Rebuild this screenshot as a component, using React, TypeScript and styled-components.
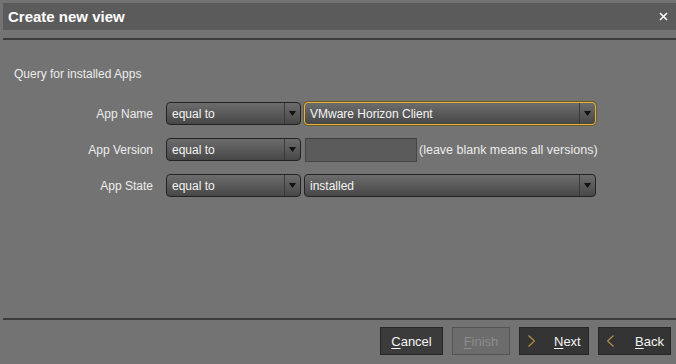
import React from "react";
import styled, { createGlobalStyle } from "styled-components";

const GlobalStyle = createGlobalStyle`
  html, body {
    margin: 0;
    padding: 0;
    background: #737373;
  }
  * {
    box-sizing: border-box;
  }
`;

const Window = styled.div`
  display: flex;
  flex-direction: column;
  height: 364px;
  padding: 3px 0 0 3px;
  font-family: "Liberation Sans", Arial, sans-serif;
  font-size: 12px;
  color: #f0f0f0;
`;

const TitleBar = styled.div`
  display: flex;
  align-items: center;
  justify-content: space-between;
  height: 27px;
  padding: 0 7px 0 5px;
  background: #5b5b5b;
`;

const Title = styled.h1`
  margin: 0;
  font-size: 15px;
  font-weight: bold;
  color: #ffffff;
`;

const CloseButton = styled.button`
  display: flex;
  align-items: center;
  justify-content: center;
  width: 12px;
  height: 12px;
  padding: 0;
  border: none;
  background: none;
  cursor: pointer;
`;

const Divider = styled.hr<{ $top: number }>`
  margin: ${(p) => p.$top}px 0 0;
  border: none;
  border-top: 2px solid #3c3c3c;
  height: 0;
`;

const Content = styled.div`
  flex: 1;
  padding: 27px 0 0 11px;
`;

const SectionTitle = styled.p`
  margin: 0 0 21px;
  line-height: 14px;
  color: #ececec;
`;

const Form = styled.div`
  display: flex;
  flex-direction: column;
  gap: 13px;
`;

const Row = styled.div`
  display: flex;
  align-items: center;
  height: 23px;
`;

const Label = styled.span`
  width: 139px;
  margin-right: 13px;
  text-align: right;
  color: #ececec;
`;

const SelectBox = styled.div<{ $width: number; $focused?: boolean }>`
  display: flex;
  align-items: stretch;
  width: ${(p) => p.$width}px;
  height: 23px;
  margin-right: 3px;
  border: 1px solid ${(p) => (p.$focused ? "#e2b23a" : "#232323")};
  border-radius: 4px;
  background: linear-gradient(#6c6c6c 0%, #5a5a5a 50%, #474747 100%);
  box-shadow: ${(p) => (p.$focused ? "0 0 0 1px #6e5a2a" : "none")};
  overflow: hidden;
`;

const SelectValue = styled.span`
  flex: 1;
  display: flex;
  align-items: center;
  padding-left: 5px;
  color: #f4f4f4;
`;

const SelectArrow = styled.span`
  display: flex;
  align-items: center;
  justify-content: center;
  width: 16px;
  border-left: 1px solid #3a3a3a;
`;

const TextInput = styled.input`
  width: 112px;
  height: 24px;
  margin: 0 2px 0 1px;
  padding: 0 4px;
  border: 1px solid #464646;
  border-top-color: #3e3e3e;
  background: #5b5b5b;
  color: #f0f0f0;
  font: inherit;
  outline: none;
`;

const Hint = styled.span`
  font-size: 12.5px;
  color: #ececec;
`;

const Footer = styled.div`
  display: flex;
  justify-content: flex-end;
  gap: 9px;
  padding: 7px 5px 9px 0;
`;

const Button = styled.button<{ $disabled?: boolean; $width: number }>`
  display: flex;
  align-items: center;
  justify-content: center;
  width: ${(p) => p.$width}px;
  height: 28px;
  padding: 0;
  border: 1px solid ${(p) => (p.$disabled ? "#555555" : "#262626")};
  background: ${(p) => (p.$disabled ? "#6c6c6c" : "#3b3b3b")};
  color: ${(p) => (p.$disabled ? "#8c8c8c" : "#f4f4f4")};
  font-family: "Liberation Sans", Arial, sans-serif;
  font-size: 13px;
  cursor: ${(p) => (p.$disabled ? "default" : "pointer")};

  u {
    text-decoration-thickness: 1px;
    text-underline-offset: 2px;
  }
`;

const NavButton = styled(Button)<{ $gap: number }>`
  justify-content: flex-start;
  padding-left: 8px;
  background: #343434;

  svg {
    margin-right: ${(p) => p.$gap}px;
  }
`;

const Chevron = styled.svg`
  width: 7px;
  height: 12px;
`;

const Arrow = () => (
  <svg width="7" height="5" viewBox="0 0 7 5">
    <polygon points="0,0 7,0 3.5,5" fill="#111" />
  </svg>
);

const Select: React.FC<{ width: number; value: string; focused?: boolean }> = ({
  width,
  value,
  focused,
}) => (
  <SelectBox $width={width} $focused={focused}>
    <SelectValue>{value}</SelectValue>
    <SelectArrow>
      <Arrow />
    </SelectArrow>
  </SelectBox>
);

const App: React.FC = () => {
  return (
    <>
      <GlobalStyle />
      <Window>
        <TitleBar>
          <Title>Create new view</Title>
          <CloseButton aria-label="Close">
            <svg width="9" height="9" viewBox="0 0 9 9">
              <path d="M1 1 L8 8 M8 1 L1 8" stroke="#fff" strokeWidth="1.6" />
            </svg>
          </CloseButton>
        </TitleBar>
        <Divider $top={8} />
        <Content>
          <SectionTitle>Query for installed Apps</SectionTitle>
          <Form>
            <Row>
              <Label>App Name</Label>
              <Select width={135} value="equal to" />
              <Select width={292} value="VMware Horizon Client" focused />
            </Row>
            <Row>
              <Label>App Version</Label>
              <Select width={135} value="equal to" />
              <TextInput />
              <Hint>(leave blank means all versions)</Hint>
            </Row>
            <Row>
              <Label>App State</Label>
              <Select width={135} value="equal to" />
              <Select width={292} value="installed" />
            </Row>
          </Form>
        </Content>
        <Divider $top={0} />
        <Footer>
          <Button $width={63}>
            <span>
              <u>C</u>ancel
            </span>
          </Button>
          <Button $width={58} $disabled>
            <span>
              <u>F</u>inish
            </span>
          </Button>
          <NavButton $width={70} $gap={19}>
            <Chevron viewBox="0 0 7 12">
              <path d="M0.5 0.5 L6.5 6 L0.5 11.5" fill="none" stroke="#b8964a" strokeWidth="1.1" />
            </Chevron>
            <span>
              <u>N</u>ext
            </span>
          </NavButton>
          <NavButton $width={73} $gap={21}>
            <Chevron viewBox="0 0 7 12">
              <path d="M6.5 0.5 L0.5 6 L6.5 11.5" fill="none" stroke="#b8964a" strokeWidth="1.1" />
            </Chevron>
            <span>
              <u>B</u>ack
            </span>
          </NavButton>
        </Footer>
      </Window>
    </>
  );
};

export default App;
